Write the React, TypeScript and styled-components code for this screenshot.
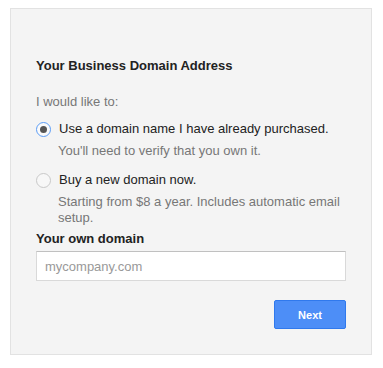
import React, { useState } from 'react';
import styled, { createGlobalStyle } from 'styled-components';

const GlobalStyle = createGlobalStyle`
  body {
    margin: 0;
    background: #ffffff;
    font-family: "Liberation Sans", Arial, sans-serif;
  }
`;

const Panel = styled.div`
  box-sizing: border-box;
  margin: 8px 0 0 10px;
  width: 362px;
  height: 347px;
  background: #f4f4f4;
  border: 1px solid #e2e2e2;
  padding: 49px 25px 0 25px;
`;

const Title = styled.h2`
  margin: 0 0 19px;
  font-size: 13px;
  line-height: 16px;
  font-weight: bold;
  color: #222;
`;

const Prompt = styled.div`
  font-size: 13px;
  line-height: 17px;
  color: #777;
  margin-bottom: 10px;
`;

const Option = styled.label`
  display: flex;
  align-items: flex-start;
  gap: 8px;
  cursor: pointer;
  margin-bottom: 6px;
`;

const Radio = styled.span<{ checked: boolean }>`
  box-sizing: border-box;
  flex: none;
  width: 15px;
  height: 15px;
  margin-top: 2px;
  border-radius: 50%;
  border: 1px solid ${({ checked }) => (checked ? '#5b9cf6' : '#c8c8c8')};
  background: ${({ checked }) => (checked ? '#fafafa' : '#f7f7f7')};
  display: flex;
  align-items: center;
  justify-content: center;
  &::after {
    content: '';
    width: 7px;
    height: 7px;
    border-radius: 50%;
    background: #555;
    display: ${({ checked }) => (checked ? 'block' : 'none')};
  }
`;

const OptionText = styled.div`
  font-size: 13px;
  line-height: 17px;
  color: #222;
`;

const Hint = styled.div`
  font-size: 13px;
  line-height: 16px;
  color: #777;
  padding-left: 22px;
  margin-bottom: 12px;
`;

const FieldLabel = styled.div`
  font-size: 13px;
  line-height: 16px;
  font-weight: bold;
  color: #222;
  margin: -7px 0 4px;
`;

const Input = styled.input`
  box-sizing: border-box;
  display: block;
  width: 100%;
  height: 30px;
  padding: 0 8px;
  border: 1px solid #d9d9d9;
  border-top-color: #c0c0c0;
  background: #fff;
  font-family: inherit;
  font-size: 13px;
  color: #222;
  outline: none;
  &::placeholder {
    color: #999;
  }
`;

const Actions = styled.div`
  display: flex;
  justify-content: flex-end;
  margin-top: 19px;
`;

const Button = styled.button`
  box-sizing: border-box;
  width: 72px;
  height: 29px;
  border-radius: 2px;
  border: 1px solid #3079ed;
  background: #4d8ef7;
  color: #fff;
  font-family: inherit;
  font-size: 11px;
  font-weight: bold;
  cursor: pointer;
`;

export default function App() {
  const [choice, setChoice] = useState<'own' | 'new'>('own');
  return (
    <>
      <GlobalStyle />
      <Panel>
        <Title>Your Business Domain Address</Title>
        <Prompt>I would like to:</Prompt>
        <Option onClick={() => setChoice('own')}>
          <Radio checked={choice === 'own'} />
          <OptionText>Use a domain name I have already purchased.</OptionText>
        </Option>
        <Hint>You'll need to verify that you own it.</Hint>
        <Option onClick={() => setChoice('new')}>
          <Radio checked={choice === 'new'} />
          <OptionText>Buy a new domain now.</OptionText>
        </Option>
        <Hint>Starting from $8 a year. Includes automatic email setup.</Hint>
        <FieldLabel>Your own domain</FieldLabel>
        <Input placeholder="mycompany.com" />
        <Actions>
          <Button>Next</Button>
        </Actions>
      </Panel>
    </>
  );
}
